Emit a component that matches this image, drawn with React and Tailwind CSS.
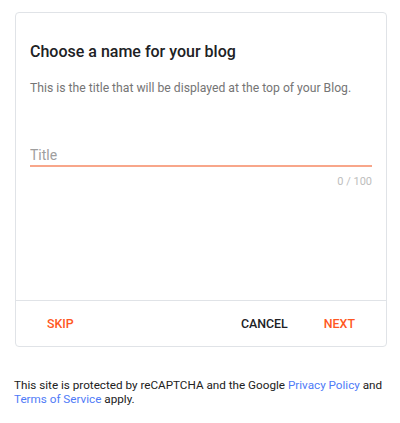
export default function App() {
  return (
    <div
      className="min-h-screen bg-white px-[15px] pt-[12px] text-[#212121]"
      style={{ fontFamily: "Roboto, 'Liberation Sans', sans-serif" }}
    >
      <div className="w-[372px] rounded-[4px] border border-[#e0e3e7]">
        <div className="h-[287px] px-[14px] pt-[29px]">
          <h2 className="text-[16px] font-medium leading-[20px] text-[#202124]">
            Choose a name for your blog
          </h2>
          <p className="mt-[18px] whitespace-nowrap text-[12.2px] leading-[16px] text-[#757575]">
            This is the title that will be displayed at the top of your Blog.
          </p>

          <div className="mt-[47px]">
            <input
              placeholder="Title"
              className="w-full border-b-2 border-[#f8a68a] pb-[1px] text-[14px] leading-[18px] text-[#212121] outline-none placeholder:text-[#9e9e9e]"
            />
            <div className="mt-[8px] text-right text-[11px] leading-[14px] text-[#bdbdbd]">
              0 / 100
            </div>
          </div>
        </div>

        <div className="flex h-[46px] items-center border-t border-[#e0e3e7] px-[16px] pt-[2px] text-[12.4px] font-medium">
          <button className="px-[15px] text-[#ff5722]">SKIP</button>
          <div className="flex-1" />
          <button className="px-[15px] text-[#202124]">CANCEL</button>
          <button className="ml-[6px] px-[15px] text-[#ff5722]">NEXT</button>
        </div>
      </div>

      <p className="mt-[31px] -ml-[1px] w-[372px] whitespace-nowrap text-[11.7px] leading-[14px] text-[#212121]">
        This site is protected by reCAPTCHA and the Google{" "}
        <a className="text-[#4f7bf7]">Privacy Policy</a> and
        <br />
        <a className="text-[#4f7bf7]">Terms of Service</a> apply.
      </p>
    </div>
  );
}
